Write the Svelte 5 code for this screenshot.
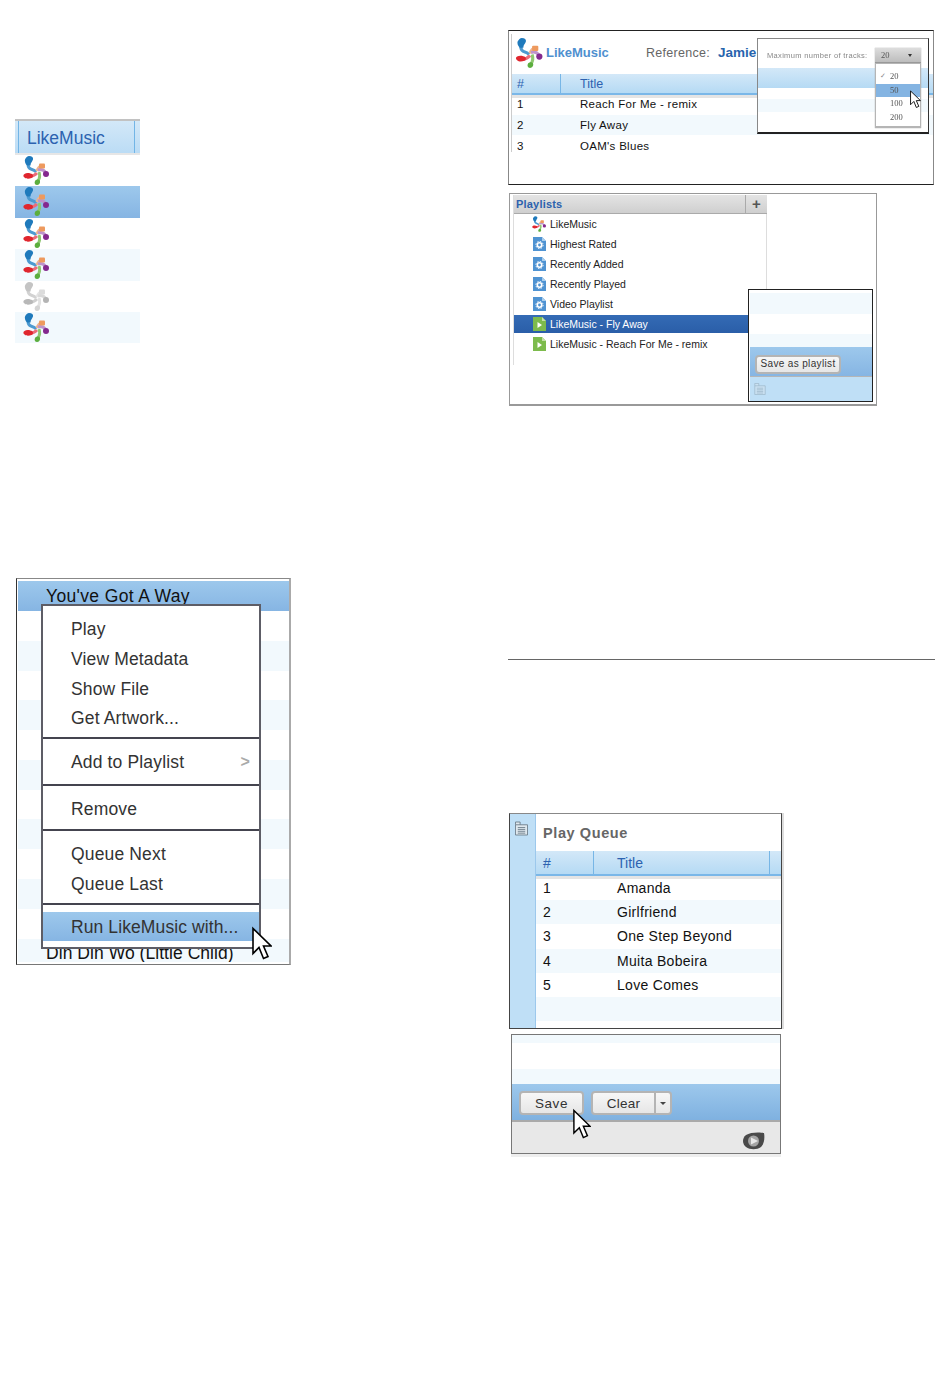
<script>
  const logoRows = ['', 'sel', '', 'tint', 'grey', 'tint'];
  const menuBack = Array.from({ length: 13 }, (_, i) => i);
  const topTracks = ['Reach For Me - remix', 'Fly Away', "OAM's Blues"];
  const queue = ['Amanda', 'Girlfriend', 'One Step Beyond', 'Muita Bobeira', 'Love Comes', ''];
  const playlists = [
    { t: 'LikeMusic', k: 'logo' },
    { t: 'Highest Rated', k: 'auto' },
    { t: 'Recently Added', k: 'auto' },
    { t: 'Recently Played', k: 'auto' },
    { t: 'Video Playlist', k: 'auto' },
    { t: 'LikeMusic - Fly Away', k: 'play', sel: true },
    { t: 'LikeMusic - Reach For Me - remix', k: 'play' }
  ];
</script>

{#snippet logo(cls)}
  <svg class={cls} viewBox="0 0 26 29" aria-hidden="true">
    <g fill="none">
      <path d="M5 8c0 3 2 5 4 5.500s3 1 4 2.500" stroke="#4d9ad0" stroke-width="3"/>
      <path d="M19 10c-3 0-4 2-5 5" stroke="#f0b48c" stroke-width="3"/>
      <path d="M15 14c3-1 6 0 8 3" stroke="#bd94cc" stroke-width="3"/>
      <path d="M5 20c3 1 6 0 9-3" stroke="#ec6c78" stroke-width="3"/>
      <path d="M16 16c1 3 1 6-1 9" stroke="#8fc872" stroke-width="3"/>
    </g>
    <path d="M6 0c3 0 4.500 1.500 4 3.500-.5 2-2.500 3-2.500 6l-3.500 0c-2-2-2.500-4.500-2-6C3 1.500 4.500 0 6 0z" fill="#1f7abc"/>
    <rect x="16" y="7.500" width="6" height="5" rx="1" fill="#ee9a5e"/>
    <circle cx="23" cy="18" r="3" fill="#84298e"/>
    <path d="M1.500 18c2-1.500 6-1 8 .5 1 1 .5 3-1 3.500-2.500 1-5.500 1-7-.5-1.500-1-1.500-2.500 0-3.500z" fill="#e0262e"/>
    <path d="M12 25c1-2 4.500-2 5 0 .5 2-1 4-3 4s-3-2-2-4z" fill="#5cae3e"/>
  </svg>
{/snippet}

{#snippet pointer(cls)}
  <svg class={cls} viewBox="0 0 20 33" aria-hidden="true">
    <path d="M1 1v25l6-6 4.500 11 4.500-2-4.500-10.500H19z" fill="#fff" stroke="#000" stroke-width="1.600" stroke-linejoin="miter"/>
  </svg>
{/snippet}

{#snippet queueIcon(cls)}
  <svg class={cls} viewBox="0 0 14 15" aria-hidden="true">
    <path d="M.5 3.500h13v11H.5zM.5 3.500v-3h5v3" fill="#dfe8ee" stroke="#6f7f8c"/>
    <path d="M3 6.500h8M3 8.500h8M3 10.500h8M3 12.500h8" stroke="#6f7f8c"/>
  </svg>
{/snippet}

<div class="page">
  <section class="col left">
    <figure class="fig1">
      <div class="h1"><span>LikeMusic</span></div>
      {#each logoRows as r}
        <div class="lr {r}">{@render logo(r === 'grey' ? 'mark greyed' : 'mark')}</div>
      {/each}
    </figure>

    <figure class="fig2">
      <div class="back">
        <div class="brow first">You've Got A Way</div>
        {#each menuBack as i}
          <div class="brow" class:tint={i % 2 === 1}>{i === 11 ? 'Din Din Wo (Little Child)' : ''}</div>
        {/each}
      </div>
      <div class="menu">
        <div class="group g1">
          <div class="mi">Play</div>
          <div class="mi">View Metadata</div>
          <div class="mi">Show File</div>
          <div class="mi">Get Artwork...</div>
        </div>
        <div class="group g2"><div class="mi">Add to Playlist<i class="chev">&gt;</i></div></div>
        <div class="group g3"><div class="mi">Remove</div></div>
        <div class="group g4">
          <div class="mi">Queue Next</div>
          <div class="mi">Queue Last</div>
        </div>
        <div class="group g5"><div class="mi on">Run LikeMusic with...</div></div>
      </div>
      {@render pointer('cur cur2')}
    </figure>
  </section>

  <section class="col right">
    <figure class="fig3">
      <div class="top">
        {@render logo('mark big')}
        <b class="brand">LikeMusic</b>
        <span class="ref">Reference:</span>
        <b class="jamie">Jamie</b>
      </div>
      <div class="thead t3"><span class="num">#</span><span class="ttl">Title</span></div>
      {#each topTracks as t, i}
        <div class="trow t3r" class:tint={i === 1}><span class="num">{i + 1}</span><span class="ttl">{t}</span></div>
      {/each}
      <div class="pop">
        <div class="band"></div>
        <div class="stripe"></div>
        <div class="line"><span>Maximum number of tracks:</span></div>
        <div class="drop">
          <div class="dbtn"><span>20</span><i></i></div>
          <div class="dlist">
            <div><em>✓</em><span>20</span></div>
            <div class="on"><span>50</span></div>
            <div><span>100</span></div>
            <div><span>200</span></div>
          </div>
        </div>
        {@render pointer('cur cur3')}
      </div>
    </figure>

    <figure class="fig4">
      <div class="plpane">
        <div class="plhead"><b>Playlists</b><span class="plus">+</span></div>
        <div class="pllist">
          {#each playlists as p}
            <div class="pl" class:sel={p.sel}>
              {#if p.k === 'logo'}
                {@render logo('mark small')}
              {:else}
                <svg class="doc" viewBox="0 0 13 14" aria-hidden="true">
                  <path d="M0 0h9l4 4v10H0z" fill={p.k === 'auto' ? '#4f93d2' : '#7dbb4d'}/>
                  <path d="M9 0l4 4H9z" fill={p.k === 'auto' ? '#a9cdec' : '#c3e0a8'}/>
                  {#if p.k === 'auto'}
                    <circle cx="6.500" cy="8" r="2.200" fill="none" stroke="#fff" stroke-width="1.600"/>
                    <circle cx="6.500" cy="8" r="3.600" fill="none" stroke="#fff" stroke-width="1" stroke-dasharray="1.500 1.300"/>
                  {:else}
                    <path d="M4.500 5v6l4.500-3z" fill="#fff"/>
                  {/if}
                </svg>
              {/if}
              <span>{p.t}</span>
            </div>
          {/each}
        </div>
      </div>
      <div class="savepop">
        <div class="s-tint a"></div>
        <div class="s-white"></div>
        <div class="s-tint b"></div>
        <div class="s-blue"><button class="btn sv">Save as playlist</button></div>
        <div class="s-foot">{@render queueIcon('qi faded')}</div>
      </div>
    </figure>

    <hr class="rule" />

    <figure class="fig5">
      <aside class="rail">{@render queueIcon('qi')}</aside>
      <div class="qmain">
        <h3>Play Queue</h3>
        <div class="thead t5"><span class="num">#</span><span class="ttl">Title</span></div>
        {#each queue as t, i}
          <div class="trow t5r" class:tint={i % 2 === 1}><span class="num">{t ? i + 1 : ''}</span><span class="ttl">{t}</span></div>
        {/each}
      </div>
    </figure>

    <figure class="fig6">
      <div class="s6 tint h8"></div>
      <div class="s6 h26"></div>
      <div class="s6 tint h15"></div>
      <div class="bar">
        <button class="btn save">Save</button>
        <div class="split"><button class="btn clear">Clear</button><button class="btn arrow" aria-label="More"><i></i></button></div>
      </div>
      <div class="foot">
        <svg class="brandmark" viewBox="0 0 23 18" aria-hidden="true">
          <path d="M4 3C8 0 18 0 22 1c1 5 0 11-3 14-4 3-11 3-15 0C0 12 0 6 4 3z" fill="#4a4a4a"/>
          <circle cx="11.500" cy="9" r="5.500" fill="#a5a5a5"/>
          <path d="M9 5.500v7L16 9z" fill="#e8e8e8"/>
        </svg>
      </div>
      {@render pointer('cur cur6')}
    </figure>
  </section>
</div>

<style>
  :global(body) { margin: 0; background: #fff; }
  .page {
    width: 950px; height: 1387px; overflow: hidden;
    display: grid; grid-template-columns: 508px 442px;
    font-family: "DejaVu Sans", sans-serif; color: #111;
  }
  figure { margin: 0; box-sizing: border-box; position: relative; }
  .col { display: flex; flex-direction: column; align-items: flex-start; }
  .left { padding-left: 15px; }
  button { font: inherit; color: inherit; margin: 0; }

  /* figure 1 */
  .fig1 { margin-top: 119px; width: 125px; }
  .h1 {
    height: 36px; box-sizing: border-box; border-top: 2px solid #c2c2c2; border-bottom: 2px solid #e6e6e6;
    background: linear-gradient(#d3e8f8, #bbdcf5);
    padding: 0 5px 0 3px; display: flex;
  }
  .h1 span {
    flex: 1; border-left: 1px solid #72b5e6; border-right: 1px solid #72b5e6;
    padding-left: 8px; line-height: 34px; font-size: 17.500px; color: #2c62b0; font-family: "Liberation Sans", sans-serif;
  }
  .lr { height: 31.400px; padding: 1px 0 0 8px; box-sizing: border-box; }
  .lr.sel { background: linear-gradient(#9dc8ec, #86b5e3); }
  .lr.tint { background: #f2f9fd; }
  .mark { display: block; width: 26px; height: 29px; }
  .greyed { filter: grayscale(1) opacity(.4); }
  .mark.big { width: 28px; height: 30px; }
  .mark.small { width: 14px; height: 16px; margin: 0 0 0 18px; flex: none; }

  /* figure 2 */
  .fig2 {
    margin: 235px 0 0 1px; width: 275px; height: 387px;
    border-top: 1px solid #888; border-left: 1px solid #333; border-right: 2px solid #aaa; border-bottom: 1px solid #777;
    padding: 2px 0 0 1px; overflow: visible;
  }
  .back { height: 381px; overflow: hidden; }
  .brow {
    height: 29.780px; padding-left: 28px; font-size: 17.500px; line-height: 29px;
    font-family: "Liberation Sans", sans-serif; letter-spacing: .05px;
  }
  .brow.first { background: linear-gradient(#9dc8ec, #86b5e3); line-height: 30px; letter-spacing: .35px; }
  .brow.tint { background: #f2f9fd; }
  .menu {
    position: absolute; left: 24px; top: 25px; width: 220px; height: 345px; box-sizing: border-box;
    background: #fff; border: 2px solid #5d5d66;
    font-family: "Liberation Sans", sans-serif; font-size: 17.500px; color: #333; letter-spacing: .15px;
  }
  .group { border-bottom: 2px solid #44444f; box-sizing: border-box; }
  .g1 { height: 133px; padding-top: 8px; }
  .g2 { height: 47px; padding-top: 8px; }
  .g3 { height: 45px; padding-top: 8px; }
  .g4 { height: 74px; padding-top: 8px; }
  .g5 { border: 0; padding-top: 7px; }
  .mi { height: 29.700px; line-height: 30px; padding-left: 28px; position: relative; }
  .mi.on { background: linear-gradient(#9dc8ec, #86b5e3); height: 29px; letter-spacing: .1px; }
  .chev { position: absolute; right: 9px; top: 0; font-style: normal; color: #aaa; font-size: 16px; font-weight: bold; }
  .cur { position: absolute; display: block; }
  .cur2 { left: 235px; top: 347px; width: 20px; height: 36px; }

  /* right */
  .fig3 {
    margin-top: 30px; width: 426px; height: 155px;
    border-top: 1px solid #222; border-bottom: 1px solid #222; border-left: 1px solid #888; border-right: 1px solid #888;
    padding-left: 3px;
  }
  .fig3::before { content: ""; position: absolute; left: 2px; top: 3px; width: 1px; height: 118px; background: #ccc; }
  .top { height: 43px; display: flex; align-items: center; padding-left: 3px; position: relative; }
  .brand { font-family: "Liberation Sans", sans-serif; font-size: 13px; color: #4f90cf; margin-left: 3px; width: 100px; }
  .ref { font-family: "Liberation Sans", sans-serif; font-size: 12.500px; color: #666; letter-spacing: .3px; width: 72px; }
  .jamie { font-family: "Liberation Sans", sans-serif; font-size: 13.500px; color: #2864ad; }
  .thead {
    background: linear-gradient(#d3e8f8, #b5daf4); border-bottom: 2px solid #7ab7e8; box-sizing: border-box;
    display: flex; align-items: center; color: #2c62b0; box-shadow: 0 3px 0 #e4e4e4; position: relative;
    font-family: "Liberation Sans", sans-serif;
  }
  .t3 { height: 21px; font-size: 12.500px; padding-left: 5px; }
  .num { display: block; }
  .t3 .num, .t3r .num { width: 63px; }
  .t3::after { content: ""; position: absolute; left: 48px; top: 0; bottom: 0; width: 1px; background: #77b6e6; }
  .trow { display: flex; align-items: center; font-family: "Liberation Sans", sans-serif; letter-spacing: .3px; }
  .trow.tint { background: #f2f9fd; }
  .t3r { height: 20.700px; font-size: 11.500px; padding-left: 5px; }
  .t3 + .t3r { margin-top: -1px; }

  .pop {
    position: absolute; left: 248px; top: 7px; width: 172px; height: 96px; box-sizing: border-box;
    background: #fff; border: 1px solid #888; border-bottom: 2px solid #222; border-right: 1px solid #333;
    overflow: hidden;
  }
  .band { position: absolute; left: 0; right: 0; top: 29px; height: 20px; background: linear-gradient(#d3e8f8, #b5daf4); }
  .stripe { position: absolute; left: 0; right: 0; top: 60px; height: 13px; background: #f2f9fd; }
  .line { position: absolute; left: 9px; top: 11px; font: 7.500px/12px "Liberation Sans", sans-serif; color: #888; letter-spacing: .32px; filter: blur(.35px); }
  .drop { position: absolute; left: 117px; top: 9px; width: 46px; font: 8.500px "Liberation Serif", serif; color: #555; box-shadow: 0 0 1px #999; }
  .drop span { filter: blur(.35px); display: inline-block; }
  .dbtn { height: 15px; background: linear-gradient(#ddd, #bdbdbd); padding-left: 6px; line-height: 15px; position: relative; border-bottom: 1px solid #999; box-sizing: border-box; }
  .dbtn i { position: absolute; right: 9px; top: 6px; border: 2px solid transparent; border-top: 3px solid #333; }
  .dlist { height: 65px; box-sizing: border-box; background: #fff; border: 1px solid #b5b5b5; border-bottom-width: 2px; padding-top: 6px; }
  .dlist div { height: 13.500px; line-height: 13.500px; padding-left: 14px; position: relative; }
  .dlist .on { background: #84b4e2; }
  .dlist em { position: absolute; left: 4px; font-style: normal; font-size: 7px; color: #888; }
  .cur3 { left: 152px; top: 51px; width: 11px; height: 19px; }

  .fig4 {
    margin: 8px 0 0 1px; width: 368px; height: 213px;
    border: 1px solid #999; border-bottom-width: 2px; padding: 1px 0 0 3px;
  }
  .plpane { width: 254px; height: 170px; border-right: 1px solid #ddd; border-left: 1px solid #ddd; box-sizing: border-box; }
  .plhead {
    height: 19px; box-sizing: border-box; background: linear-gradient(#e4e4e4, #cfcfcf); border-bottom: 1px solid #aaa;
    display: flex; align-items: center; justify-content: space-between; position: relative; padding-left: 2px;
    margin-right: -1px;
  }
  .plhead b { font: bold 11px/21px "Liberation Sans", sans-serif; color: #2c62ae; letter-spacing: .2px; }
  .plus { width: 22px; border-left: 1px solid #aaa; height: 100%; box-sizing: border-box; text-align: center; font: bold 15px/17px "Liberation Sans", sans-serif; color: #555; }
  .pl {
    height: 20px; display: flex; align-items: center; font: 10.500px "Liberation Sans", sans-serif; color: #222;
  }
  .pl span { margin-left: 4px; white-space: nowrap; }
  .pl.sel { background: linear-gradient(#346bb5, #2a5ea8); color: #fff; height: 18px; margin: 1px 0; }
  .doc { width: 13px; height: 14px; margin-left: 19px; flex: none; }

  .savepop {
    position: absolute; left: 238px; top: 95px; width: 125px; height: 113px; box-sizing: border-box;
    background: #fff; border: 1px solid #222;
    padding-left: 1px; display: flex; flex-direction: column;
  }
  .s-tint.a { height: 21px; background: #f2f9fd; margin-top: 3px; }
  .s-white { height: 20px; }
  .s-tint.b { height: 13px; background: #f2f9fd; }
  .s-blue { height: 30px; box-sizing: border-box; background: linear-gradient(#9dc8ec, #86b5e3); border-bottom: 1px solid #b5b5b5; padding: 5px 0 0 5px; }
  .s-foot { flex: 1; background: #bfdff6; padding: 6px 0 0 4px; }
  .qi { display: block; width: 13px; height: 15px; }
  .qi.faded { width: 12px; height: 12px; opacity: .4; }

  .btn {
    border: 2px solid #b4b4b4; border-radius: 4px; background: linear-gradient(#f7f7f7, #e6e6e6);
    font-family: "Liberation Sans", sans-serif; padding: 0; box-sizing: border-box; letter-spacing: .6px;
  }
  .sv { width: 86px; height: 19px; font-size: 10px; line-height: 13px; color: #333; white-space: nowrap; letter-spacing: .35px; padding-bottom: 2px; }

  .rule { width: 427px; height: 1px; background: #666; border: 0; margin: 253px 0 0; }

  .fig5 {
    margin: 153px 0 0 1px; width: 273px; height: 216px; display: flex;
    border: 1px solid #444; border-top-color: #888; box-shadow: 2px 0 0 #ddd;
  }
  .rail { width: 26px; flex: none; background: #bfdff6; border-right: 1px solid #9cc8ec; padding: 7px 0 0 5px; box-sizing: border-box; }
  .qmain { flex: 1; min-width: 0; }
  h3 { margin: 0; height: 37px; padding-left: 7px; font: bold 14.500px/39px "Liberation Sans", sans-serif; color: #666; letter-spacing: .6px; }
  .t5 { height: 25px; font-size: 14px; padding: 1px 0 0 7px; }
  .t5 .num, .t5r .num { width: 74px; }
  .t5::before { content: ""; position: absolute; left: 57px; top: 0; bottom: 0; width: 1px; background: #77b6e6; }
  .t5::after { content: ""; position: absolute; left: 233px; top: 0; bottom: 0; width: 1px; background: #77b6e6; }
  .t5r { height: 24.200px; font-size: 14px; padding-left: 7px; }

  .fig6 { margin: 5px 0 0 3px; width: 270px; height: 120px; border: 1px solid #777; box-shadow: 0 3px 0 #eee; display: flex; flex-direction: column; }
  .s6.tint { background: #f2f9fd; }
  .h8 { height: 8px; } .h26 { height: 26px; } .h15 { height: 15px; }
  .bar { height: 38px; box-sizing: border-box; background: linear-gradient(#9dc8ec, #7fb1e0); border-bottom: 2px solid #aaa; padding: 7px 0 0 7px; display: flex; gap: 7px; }
  .save, .clear { height: 24px; width: 65px; font-size: 13.500px; color: #333; }
  .split { display: flex; }
  .clear { border-radius: 4px 0 0 4px; letter-spacing: .2px; }
  .arrow { width: 16px; height: 24px; border-left: 0; border-radius: 0 4px 4px 0; position: relative; }
  .arrow i { position: absolute; left: 4px; top: 9px; border: 3px solid transparent; border-top: 3px solid #444; }
  .foot { flex: 1; background: #e8e8e8; position: relative; }
  .brandmark { position: absolute; right: 15px; top: 10px; width: 23px; height: 18px; }
  .cur6 { left: 61px; top: 73px; width: 18px; height: 33px; }
</style>
